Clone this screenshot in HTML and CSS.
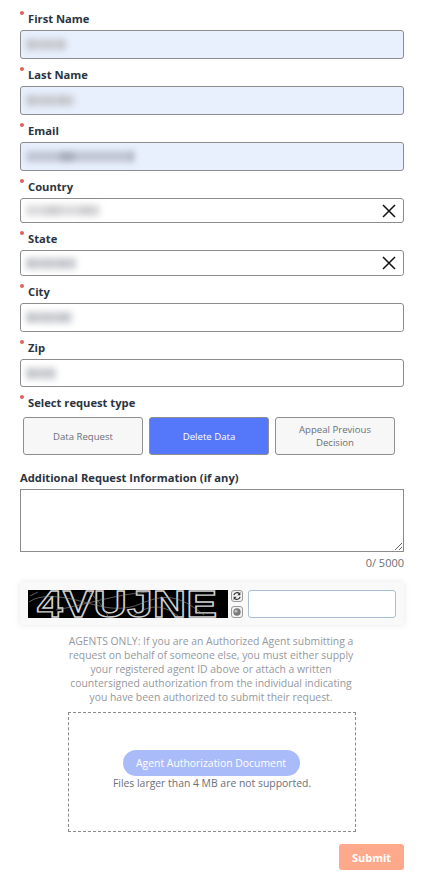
FILE: index.html
```html
<!DOCTYPE html>
<html lang="en">
<head>
    <meta charset="UTF-8">
    <title>Request Form</title>
    <link rel="stylesheet" href="styles.css">
</head>
<body>

<form class="form">
    <div class="field first">
        <label class="label required">First Name</label>
        <div class="input filled"><span class="blur" style="width: 40px"></span></div>
    </div>
    <div class="field">
        <label class="label required">Last Name</label>
        <div class="input filled"><span class="blur" style="width: 48px"></span></div>
    </div>
    <div class="field">
        <label class="label required">Email</label>
        <div class="input filled"><span class="blur dark" style="width: 108px"></span></div>
    </div>
    <div class="field">
        <label class="label required">Country</label>
        <div class="input select">
            <span class="blur light" style="width: 74px"></span>
            <svg class="clear" viewBox="0 0 14 14"><path d="M1 1L13 13M13 1L1 13"/></svg>
        </div>
    </div>
    <div class="field">
        <label class="label required">State</label>
        <div class="input select tall"><span class="blur" style="width: 50px"></span>
            <svg class="clear" viewBox="0 0 14 14"><path d="M1 1L13 13M13 1L1 13"/></svg>
        </div>
    </div>
    <div class="field">
        <label class="label required">City</label>
        <div class="input"><span class="blur" style="width: 46px"></span></div>
    </div>
    <div class="field">
        <label class="label required">Zip</label>
        <div class="input short"><span class="blur" style="width: 30px"></span></div>
    </div>
    <div class="field">
        <label class="label required">Select request type</label>
        <div class="types">
            <button type="button" class="type">Data Request</button>
            <button type="button" class="type active">Delete Data</button>
            <button type="button" class="type">Appeal Previous Decision</button>
        </div>
    </div>
    <div class="field extra">
        <label class="label">Additional Request Information (if any)</label>
        <textarea class="textarea"></textarea>
        <div class="counter">0/ 5000</div>
    </div>

    <div class="captcha">
        <svg class="captcha-img" viewBox="0 -8 200 44">
            <rect width="200" height="28" fill="#000"/>
            <text class="captcha-text" x="9" y="27" textLength="180" lengthAdjust="spacingAndGlyphs">4VUJNE</text>
            <path class="noise" d="M1 12C12 4 30 6 48 10S88 24 112 14 150 4 176 25"/>
            <path class="noise" d="M2 6L10 2M60 1C70 10 78 20 80 27M104 27C118 16 132 12 150 26M28 20C60 14 90 4 120 2"/>
        </svg>
        <div class="captcha-btns">
            <span class="captcha-btn">
                <svg viewBox="0 0 12 12"><path class="refresh" d="M2.2 5A4 4 0 0 1 9 3.2M9.8 7A4 4 0 0 1 3 8.8"/><path d="M10 1.2V5H6.4ZM2 10.8V7H5.6Z" fill="#333"/></svg>
            </span>
            <span class="captcha-btn">
                <svg viewBox="0 0 12 12"><circle cx="6" cy="6" r="4.4" fill="#777"/><circle cx="4.8" cy="5" r="2" fill="#bbb"/></svg>
            </span>
        </div>
        <input class="captcha-input" type="text">
    </div>

    <p class="note">AGENTS ONLY: If you are an Authorized Agent submitting a request on behalf of someone else, you must either supply your registered agent ID above or attach a written countersigned authorization from the individual indicating you have been authorized to submit their request.</p>

    <div class="dropzone">
        <button type="button" class="upload">Agent Authorization Document</button>
        <div class="hint">Files larger than 4 MB are not supported.</div>
    </div>

    <div class="actions">
        <button type="button" class="submit">Submit</button>
    </div>
</form>

</body>
</html>
```

FILE: styles.css
```css
body {
    margin: 0;
    background: #fff;
    font-family: "Open Sans", Arial, sans-serif;
    color: #2b3440;
}

.form {
    padding: 12px 21px 0 20px;
}

/* Fields */
.field {
    margin-top: 9px;
}

.field.first {
    margin-top: 0;
}

.label {
    display: block;
    height: 18px;
    padding-left: 8px;
    position: relative;
    font-size: 11.2px;
    font-weight: 700;
    line-height: 13px;
}

.label.required:before {
    content: "";
    position: absolute;
    left: 0;
    top: -1px;
    width: 4px;
    height: 4px;
    border-radius: 50%;
    background: #e0605f;
}

.input {
    box-sizing: border-box;
    display: flex;
    align-items: center;
    justify-content: space-between;
    height: 29px;
    padding: 0 6px 0 5px;
    border: 1px solid #8c8c8c;
    border-radius: 3px;
    background: #fff;
}

.input.filled {
    background: #e8f0fe;
}

.input.select {
    height: 25px;
}

.input.select.tall {
    height: 26px;
}

.input.short {
    height: 28px;
}

/* blurred-out values */
.blur {
    display: block;
    height: 11px;
    background: repeating-linear-gradient(90deg, #c4c7cd 0, #c4c7cd 11px, #d2d4d9 11px, #d2d4d9 14px, #c8cbd0 14px, #c8cbd0 29px, #d6d8dc 29px, #d6d8dc 31px);
    filter: blur(3px);
}

.blur.dark {
    background: repeating-linear-gradient(90deg, #c0c5d2 0, #c0c5d2 34px, #a8adbc 34px, #a8adbc 48px, #c0c5d2 48px, #c0c5d2 70px);
}

.blur.light {
    background: repeating-linear-gradient(90deg, #dcdcde 0, #dcdcde 20px, #d0d0d3 20px, #d0d0d3 34px);
}

.clear {
    width: 14px;
    height: 14px;
    margin-right: 1px;
}

.clear path {
    fill: none;
    stroke: #111;
    stroke-width: 1.5;
}

/* Request type */
.types {
    display: flex;
    gap: 6px;
    padding: 0 9px 0 3px;
    margin-top: 3px;
}

.type {
    box-sizing: border-box;
    width: 120px;
    height: 38px;
    padding: 0 8px;
    border: 1px solid #8f8f8f;
    border-radius: 3px;
    background: #f7f7f7;
    color: #6b7078;
    font-family: inherit;
    font-size: 9.6px;
    line-height: 13px;
}

.type.active {
    background: #5577f9;
    color: #fff;
}

/* Additional info */
.extra {
    margin-top: 16px;
}

.extra .label {
    padding-left: 0;
}

.textarea {
    display: block;
    box-sizing: border-box;
    width: 100%;
    height: 63px;
    margin: 0;
    border: 1px solid #8c8c8c;
    border-radius: 0;
    background: #fff;
}

.counter {
    margin-top: 4px;
    font-size: 11px;
    line-height: 14px;
    text-align: right;
    color: #6b7078;
}

/* Captcha */
.captcha {
    display: flex;
    align-items: center;
    height: 28px;
    padding: 8px 8px 7px;
    margin-top: 12px;
    background: #f9f9f9;
    box-shadow: 0 0 6px rgba(0, 0, 0, 0.1);
}

.captcha-img {
    display: block;
    flex: none;
    width: 200px;
    height: 44px;
    margin: -8px 0;
}

.captcha-text {
    font-family: "Liberation Sans", Arial, sans-serif;
    font-size: 36px;
    font-weight: 700;
    fill: none;
    stroke: #d2d2d2;
    stroke-width: 1.3;
}

.noise {
    fill: none;
    stroke: #9a9a9a;
    stroke-width: 0.6;
}

.captcha-btns {
    display: flex;
    flex-direction: column;
    gap: 4px;
    margin: 0 5px 0 3px;
}

.captcha-btn {
    box-sizing: border-box;
    display: block;
    width: 12px;
    height: 12px;
    border: 1px solid #999;
    border-radius: 3px;
    background: #f2f2f2;
}

.captcha-btn svg {
    display: block;
    width: 10px;
    height: 10px;
}

.refresh {
    fill: none;
    stroke: #333;
    stroke-width: 1.4;
}

.captcha-input {
    box-sizing: border-box;
    flex: 1;
    min-width: 0;
    height: 28px;
    margin: 0;
    border: 1px solid #a9bdd3;
    border-radius: 3px;
    background: #fff;
}

/* Agents */
.note {
    box-sizing: border-box;
    width: 290px;
    padding-right: 2px;
    margin: 9px auto 0;
    font-size: 10.4px;
    line-height: 14px;
    text-align: center;
    color: #95989d;
}

.dropzone {
    box-sizing: border-box;
    display: flex;
    flex-direction: column;
    align-items: center;
    width: 288px;
    height: 120px;
    padding-top: 37px;
    margin: 8px auto 0;
    border: 1px dashed #8c8c8c;
}

.upload {
    width: 177px;
    height: 26px;
    padding: 0;
    margin-right: 2px;
    border: none;
    border-radius: 13px;
    background: #aabbfa;
    color: #fff;
    font-family: inherit;
    font-size: 10.4px;
}

.hint {
    font-size: 10.4px;
    line-height: 14px;
    color: #6b7078;
}

.actions {
    display: flex;
    justify-content: flex-end;
    margin-top: 12px;
}

.submit {
    width: 65px;
    height: 26px;
    padding: 0;
    border: none;
    border-radius: 3px;
    background: #fea98c;
    color: #fff;
    font-family: inherit;
    font-size: 11px;
    font-weight: 700;
}
```
